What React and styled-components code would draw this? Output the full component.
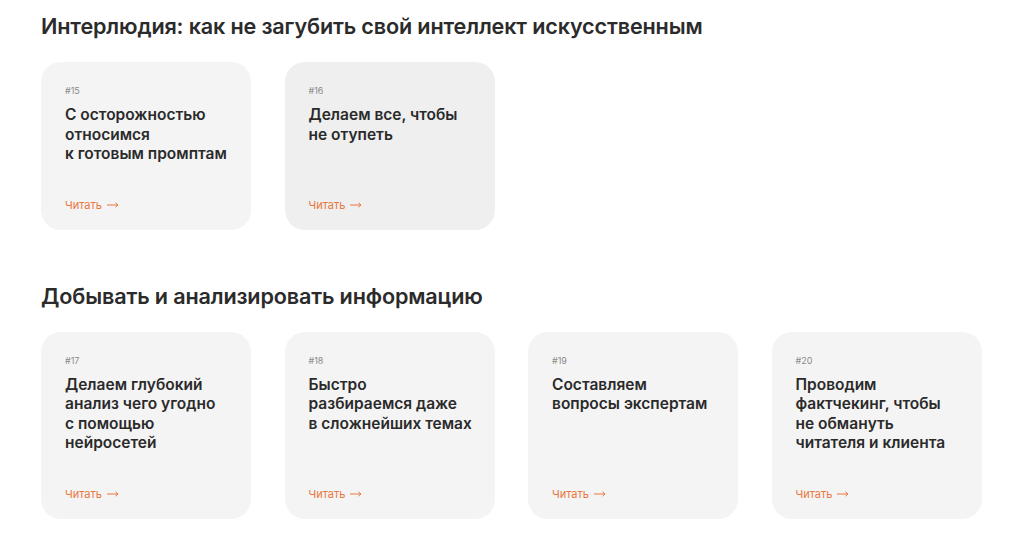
import React from 'react';
import styled, { createGlobalStyle } from 'styled-components';

const GlobalStyle = createGlobalStyle`
    body {
        margin: 0;
        background: #ffffff;
        font-family: Inter, "Liberation Sans", sans-serif;
        -webkit-font-smoothing: antialiased;
    }
`;

const Page = styled('div')`
    padding: 12px 43px 0 41px;
    display: flex;
    flex-direction: column;
    gap: 52px;
`;

const Section = styled('section')`
    display: flex;
    flex-direction: column;
    gap: 22px;
`;

const SectionTitle = styled('h2')`
    margin: 0;
    font-size: 21.6px;
    line-height: 28px;
    font-weight: 600;
    letter-spacing: -0.15px;
    color: #2b2b2b;
`;

const Grid = styled('div')`
    display: grid;
    grid-template-columns: repeat(4, 210px);
    column-gap: 33.5px;
`;

const Card = styled('a')`
    display: flex;
    flex-direction: column;
    padding: 23px 24px 18px;
    border-radius: 20px;
    background: ${(p) => (p.$active ? '#efefef' : '#f4f4f4')};
    text-decoration: none;
`;

const Number = styled('div')`
    font-size: 9px;
    line-height: 12px;
    color: #8a8a8a;
    margin-bottom: 8px;
`;

const Title = styled('div')`
    font-size: 15.5px;
    line-height: 19.5px;
    font-weight: 600;
    color: #2a2a2a;
    white-space: pre;
    flex: 1;
    margin-bottom: 34px;
`;

const ReadLink = styled('span')`
    display: inline-flex;
    align-items: center;
    gap: 5px;
    font-size: 11px;
    line-height: 14px;
    color: #e9773f;
`;

const Arrow = () => (
    <svg width="12" height="6" viewBox="0 0 12 6" fill="none">
        <path d="M0 3h11M8.5 0.8L11 3L8.5 5.2" stroke="#e9773f" strokeWidth="1" />
    </svg>
);

const sections = [
    {
        title: 'Интерлюдия: как не загубить свой интеллект искусственным',
        items: [
            { num: '#15', text: 'С осторожностью\nотносимся\nк готовым промптам' },
            { num: '#16', text: 'Делаем все, чтобы\nне отупеть', active: true }
        ]
    },
    {
        title: 'Добывать и анализировать информацию',
        items: [
            { num: '#17', text: 'Делаем глубокий\nанализ чего угодно\nс помощью\nнейросетей' },
            { num: '#18', text: 'Быстро\nразбираемся даже\nв сложнейших темах' },
            { num: '#19', text: 'Составляем\nвопросы экспертам' },
            { num: '#20', text: 'Проводим\nфактчекинг, чтобы\nне обмануть\nчитателя и клиента' }
        ]
    }
];

export default function App () {
    return (
        <Page>
            <GlobalStyle />
            {sections.map((s) => (
                <Section key={s.title}>
                    <SectionTitle>{s.title}</SectionTitle>
                    <Grid>
                        {s.items.map((item) => (
                            <Card key={item.num} $active={item.active}>
                                <Number>{item.num}</Number>
                                <Title>{item.text}</Title>
                                <ReadLink>Читать <Arrow /></ReadLink>
                            </Card>
                        ))}
                    </Grid>
                </Section>
            ))}
        </Page>
    );
}
